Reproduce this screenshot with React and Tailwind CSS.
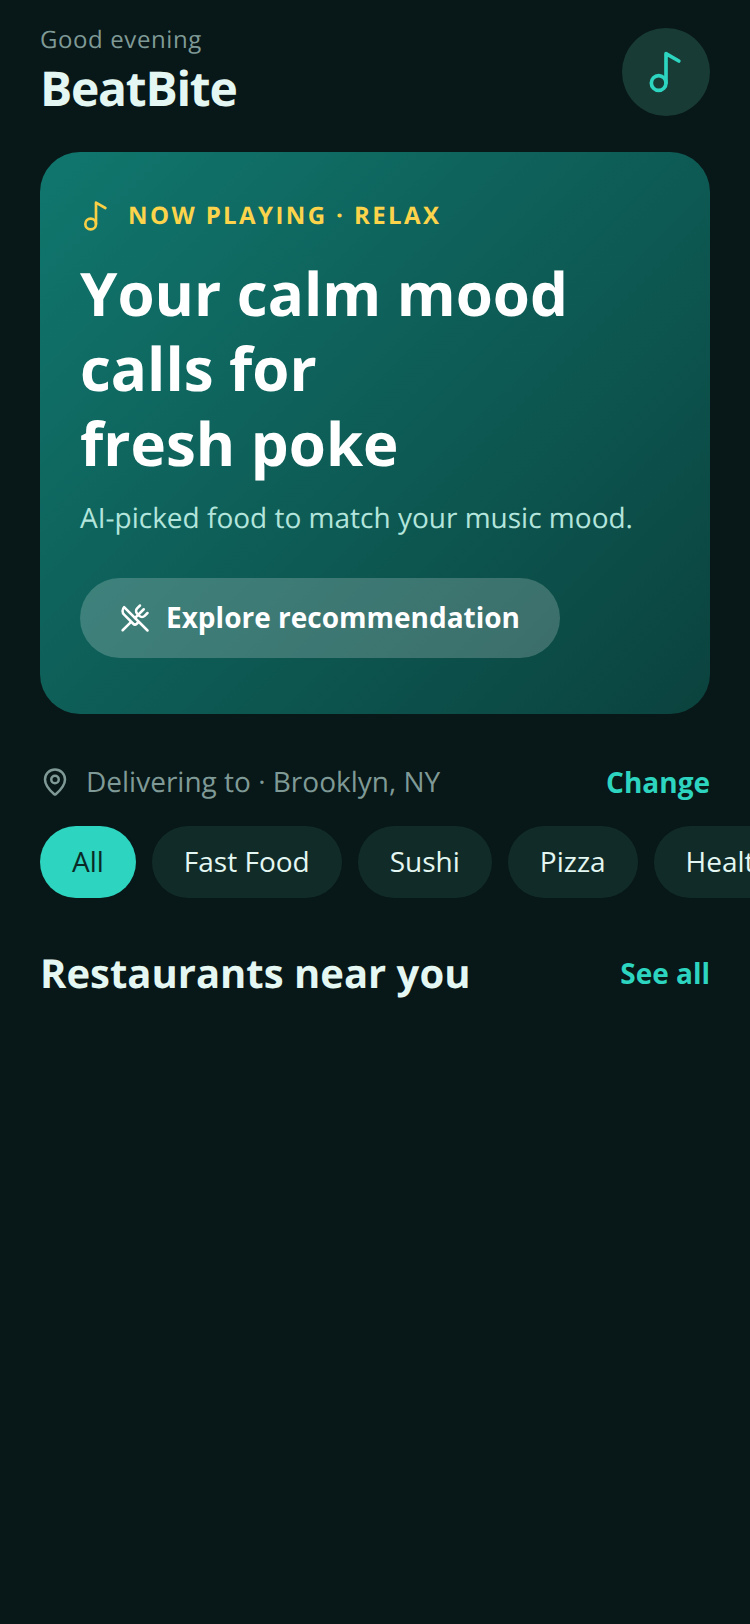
import React from 'react';
import { MapPin, Music2, UtensilsCrossed } from 'lucide-react';

const categories = ['All', 'Fast Food', 'Sushi', 'Pizza', 'Healthy', 'Desserts'];

const App = () => {
  return (
    <div className="w-[750px] h-[1624px] overflow-hidden bg-[#081717] font-['Open_Sans',sans-serif] [text-rendering:geometricPrecision]">
      {/* Header */}
      <div className="flex items-start justify-between pl-10 pr-10 pt-7">
        <div>
          <p className="text-[24px] leading-[24px] tracking-[0.6px] text-[#7f9a96]">Good evening</p>
          <h1 className="mt-[9px] text-[48px] leading-[56px] font-bold tracking-[-1.25px] text-[#e4f7f2]">BeatBite</h1>
        </div>
        <button className="flex h-[88px] w-[88px] items-center justify-center rounded-full bg-[#183b35]">
          <Music2 size={44} color="#2dd4bf" strokeWidth={2} />
        </button>
      </div>

      {/* Hero card */}
      <div className="mx-10 mt-[35px] h-[562px] rounded-[40px] bg-[linear-gradient(135deg,#10776e,#0b423e)] px-10 pt-[48px]">
        <div className="flex items-center gap-4">
          <Music2 size={32} color="#f8cf45" strokeWidth={2} />
          <span className="text-[24px] leading-[32px] font-bold tracking-[2.4px] text-[#fbd44b]">NOW PLAYING · RELAX</span>
        </div>
        <h2 className="mt-[24px] text-[60px] leading-[75px] font-bold text-white">
          Your calm mood calls for
          <br />
          fresh poke
        </h2>
        <p className="mt-[18px] text-[28px] leading-[38px] text-[#b3e5dc]">AI-picked food to match your music mood.</p>
        <button className="mt-[41px] flex h-[80px] items-center gap-4 rounded-full bg-white/20 px-10">
          <UtensilsCrossed size={30} color="#ffffff" strokeWidth={2} />
          <span className="pb-[2px] text-[28px] font-bold text-white">Explore recommendation</span>
        </button>
      </div>

      {/* Delivery location */}
      <div className="mt-[49px] flex items-center justify-between px-10">
        <div className="flex items-center gap-4">
          <MapPin size={30} color="#7f9a96" strokeWidth={2} />
          <span className="text-[28px] leading-[38px] text-[#7f9a96]">Delivering to · Brooklyn, NY</span>
        </div>
        <button className="text-[28px] leading-[38px] font-bold text-[#2dd4bf]">Change</button>
      </div>

      {/* Category chips */}
      <div className="mt-[25px] flex gap-4 overflow-hidden pl-10">
        {categories.map((label, i) => (
          <button
            key={label}
            className={
              i === 0
                ? 'h-[72px] shrink-0 rounded-full bg-[#2dd4bf] px-8 pb-[2px] text-[28px] text-[#0a2a27]'
                : 'h-[72px] shrink-0 rounded-full bg-[#112c28] px-8 pb-[2px] text-[28px] text-[#e4f7f2]'
            }
          >
            {label}
          </button>
        ))}
      </div>

      {/* Section title */}
      <div className="mt-[48px] flex items-center justify-between px-10">
        <h3 className="text-[40px] leading-[54px] font-bold text-[#e4f7f2]">Restaurants near you</h3>
        <button className="text-[28px] leading-[38px] font-bold text-[#2dd4bf]">See all</button>
      </div>
    </div>
  );
};

export default App;
